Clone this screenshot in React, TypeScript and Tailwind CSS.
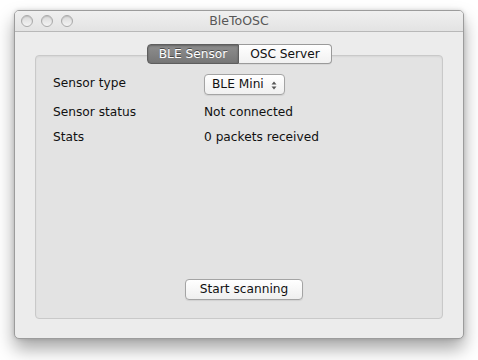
import React from "react";

const font = { fontFamily: '"DejaVu Sans", "Liberation Sans", sans-serif' };

function Light() {
  return (
    <div className="w-[12px] h-[12px] rounded-full border border-[#a9a9a9] bg-gradient-to-b from-[#d9d9d9] to-[#f4f4f4] shadow-[inset_0_1px_1px_rgba(0,0,0,0.12)]" />
  );
}

export default function App() {
  return (
    <div className="w-[478px] h-[360px] bg-white overflow-hidden pt-[10px] pl-[14px]" style={font}>
      <div className="w-[450px] h-[329px] rounded-[5px] bg-[#ececec] border border-[#9c9c9c] shadow-[0_10px_18px_rgba(0,0,0,0.35),0_0_4px_rgba(0,0,0,0.15)] flex flex-col overflow-hidden">
        {/* title bar */}
        <div className="relative h-[21px] shrink-0 bg-gradient-to-b from-[#f0f0f0] to-[#e3e3e3] border-b border-[#b8b8b8] flex items-center">
          <div className="flex gap-[8px] pl-[6px]">
            <Light />
            <Light />
            <Light />
          </div>
          <div className="absolute inset-0 flex items-center justify-center text-[12.5px] text-[#575757] leading-none">
            BleToOSC
          </div>
        </div>
        {/* content */}
        <div className="flex-1 flex flex-col px-[20px] pt-[12px] pb-[19px]">
          {/* tabs */}
          <div className="relative z-10 flex justify-center pl-[1px]">
            <div className="flex h-[20px] text-[12.2px] leading-[18px]">
              <div className="w-[92px] rounded-l-[4px] border border-[#5e5e5e] bg-gradient-to-b from-[#8e8e8e] to-[#767676] text-white text-center shadow-[inset_0_1px_2px_rgba(0,0,0,0.3)] [text-shadow:0_-1px_0_rgba(0,0,0,0.45)]">
                BLE Sensor
              </div>
              <div className="w-[93px] rounded-r-[4px] border border-l-0 border-[#9a9a9a] bg-gradient-to-b from-[#ffffff] to-[#f1f1f1] text-[#111] text-center shadow-[0_1px_0_rgba(0,0,0,0.05)]">
                OSC Server
              </div>
            </div>
          </div>
          {/* group box */}
          <div className="mt-[-9px] flex-1 rounded-[4px] border border-[#c9c9c9] bg-[#e3e3e3] shadow-[inset_0_1px_2px_rgba(0,0,0,0.06)] flex flex-col pl-[17px] pt-[18px] text-[12.2px] leading-[16px] text-[#111]">
            <div className="flex items-start h-[21px]">
              <div className="w-[151px] pt-[0.5px]">Sensor type</div>
              <div className="h-[21px] w-[81px] rounded-[4px] border border-[#a4a4a4] bg-gradient-to-b from-[#ffffff] to-[#f0f0f0] shadow-[0_1px_1px_rgba(0,0,0,0.08)] flex items-start pl-[7px] pt-[1px] relative">
                <span>BLE Mini</span>
                <svg className="absolute right-[7px] top-[6px]" width="6" height="9" viewBox="0 0 6 9">
                  <path d="M0.5 3.5 L3 0.5 L5.5 3.5 Z" fill="#555" />
                  <path d="M0.5 5.5 L3 8.5 L5.5 5.5 Z" fill="#555" />
                </svg>
              </div>
            </div>
            <div className="flex mt-[9px] h-[16px]">
              <div className="w-[151px]">Sensor status</div>
              <div>Not connected</div>
            </div>
            <div className="flex mt-[9px] h-[16px]">
              <div className="w-[151px]">Stats</div>
              <div>0 packets received</div>
            </div>
            <div className="flex-1" />
            <div className="pl-[132px] pb-[18px]">
              <div className="w-[118px] h-[21px] rounded-[4px] border border-[#a4a4a4] bg-gradient-to-b from-[#ffffff] to-[#efefef] shadow-[0_1px_1px_rgba(0,0,0,0.08)] text-center leading-[18px]">
                Start scanning
              </div>
            </div>
          </div>
        </div>
      </div>
    </div>
  );
}
